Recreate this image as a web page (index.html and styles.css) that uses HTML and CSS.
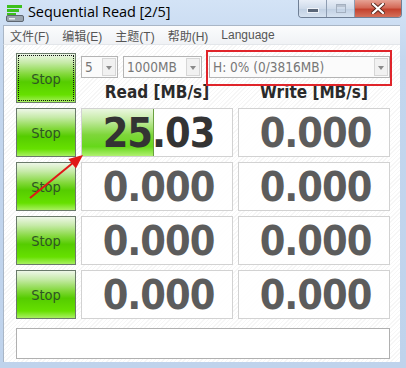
FILE: index.html
```html
<!DOCTYPE html>
<html>
<head>
<meta charset="utf-8">
<link rel="stylesheet" href="styles.css">
</head>
<body>
<div class="window">
  <div class="titlebar">
    <svg class="app-icon" width="20" height="18" viewBox="0 0 20 18">
      <rect x="2" y="1" width="15" height="3" fill="#3cc01c"/>
      <rect x="2" y="5" width="12" height="3" fill="#3cc01c"/>
      <rect x="2" y="9" width="9" height="2" fill="#3cc01c"/>
      <rect x="1.5" y="11.5" width="17" height="6" rx="1.5" fill="#9aa4ae" stroke="#5e6670"/>
      <rect x="4" y="14" width="6" height="1.5" fill="#e8ecf0"/>
    </svg>
    <span class="title">Sequential Read [2/5]</span>
    <div class="caption-btns">
      <div class="cbtn min"><span class="min-glyph"></span></div>
      <div class="cbtn max"><span class="max-glyph"></span></div>
      <div class="cbtn close">
        <svg width="14" height="11" viewBox="0 0 14 11">
          <path d="M2 1 L12 10 M12 1 L2 10" stroke="#5a2a20" stroke-width="4" stroke-linecap="square"/>
          <path d="M2 1 L12 10 M12 1 L2 10" stroke="#fff" stroke-width="2.2" stroke-linecap="square"/>
        </svg>
      </div>
    </div>
  </div>
  <div class="menubar">
    <span class="menu-item">文件(F)</span>
    <span class="menu-item">编辑(E)</span>
    <span class="menu-item">主题(T)</span>
    <span class="menu-item">帮助(H)</span>
    <span class="menu-item">Language</span>
  </div>
  <div class="client">
    <div class="grid">
      <div class="stop big focused"><span>Stop</span></div>
      <div class="top-right">
        <div class="selects">
          <div class="select s-count"><span>5</span><i class="arrow"></i></div>
          <div class="select s-size"><span>1000MB</span><i class="arrow"></i></div>
          <div class="select s-drive annotated"><span>H: 0% (0/3816MB)</span><i class="arrow"></i></div>
        </div>
        <div class="heads">
          <div class="head">Read [MB/s]</div>
          <div class="head">Write [MB/s]</div>
        </div>
      </div>

      <div class="stop"><span>Stop</span></div>
      <div class="val active"><div class="bar" style="width:47%"></div><span>25.03</span></div>
      <div class="val"><span>0.000</span></div>

      <div class="stop"><span>Stop</span></div>
      <div class="val"><span>0.000</span></div>
      <div class="val"><span>0.000</span></div>

      <div class="stop"><span>Stop</span></div>
      <div class="val"><span>0.000</span></div>
      <div class="val"><span>0.000</span></div>

      <div class="stop"><span>Stop</span></div>
      <div class="val"><span>0.000</span></div>
      <div class="val"><span>0.000</span></div>
    </div>
    <div class="status"></div>
    <svg class="annot-arrow" width="70" height="60" viewBox="0 0 70 60">
      <line x1="3" y1="45" x2="47" y2="9" stroke="#e01818" stroke-width="2"/>
      <polygon points="56,2 48.9,15.5 41.3,6.1" fill="#e01818"/>
    </svg>
  </div>
</div>
</body>
</html>
```
FILE: styles.css
```css
html, body {
  margin: 0;
  padding: 0;
}
body {
  width: 406px;
  height: 368px;
  overflow: hidden;
  font-family: "DejaVu Sans", sans-serif;
}
.window {
  width: 406px;
  height: 368px;
  box-sizing: border-box;
  background: linear-gradient(#d3e3f6, #c3d6ee 60px, #bfd3ec);
  display: flex;
  flex-direction: column;
  padding: 0 6px 6px 3px;
}
.titlebar {
  height: 25px;
  display: flex;
  align-items: flex-start;
  position: relative;
  margin-right: -6px;
}
.app-icon {
  margin: 4px 0 0 2px;
}
.title {
  font-family: "Open Sans", "Noto Sans", sans-serif;
  font-size: 14.5px;
  color: #000;
  margin: 2px 0 0 3px;
  letter-spacing: -0.1px;
}
.caption-btns {
  margin-left: auto;
  margin-right: 4px;
  display: flex;
  height: 17px;
  border: 1px solid #6f7f95;
  border-top: none;
  border-radius: 0 0 4px 4px;
  overflow: hidden;
}
.cbtn {
  display: flex;
  align-items: center;
  justify-content: center;
}
.min, .max {
  width: 27px;
  background: linear-gradient(#e8eef7, #cfdbea 50%, #c0cfe2 51%, #d6e2f0);
  border-right: 1px solid #8e9db2;
}
.min-glyph {
  width: 10px;
  height: 3px;
  background: #5a6678;
  border: 1px solid #eef2f8;
  margin-top: 4px;
}
.max-glyph {
  width: 8px;
  height: 7px;
  border: 1px solid #a4b0c0;
  box-shadow: inset 0 2px 0 #b8c2d0;
}
.close {
  width: 46px;
  background: linear-gradient(#e6a294, #d46a58 45%, #c4422e 55%, #d4705a);
}
.menubar {
  height: 18px;
  background: linear-gradient(#fbfcfd, #f0f2f5);
  border-top: 1px solid #a9b6c6;
  border-left: 1px solid #a9b6c6;
  display: flex;
  align-items: center;
  padding-left: 6px;
}
.menu-item {
  font-family: "Liberation Sans", "Noto Sans CJK SC", sans-serif;
  font-size: 12px;
  color: #555;
  margin-right: 13px;
}
.client {
  flex: 1;
  position: relative;
  border-left: 1px solid #a9b6c6;
  border-top: 1px solid #e3e6ea;
  background:
    repeating-linear-gradient(135deg, #ffffff 0 2px, #f6f6f6 2px 3px);
  padding: 8px 0 0 12px;
}
.grid {
  display: grid;
  grid-template-columns: 60px 152px 152px;
  grid-template-rows: 50px 49px 49px 49px 49px;
  column-gap: 5px;
  row-gap: 5px;
}
.stop {
  box-sizing: border-box;
  border: 1px solid #6a7a6a;
  background: linear-gradient(#eef7e8 0%, #c6eaa8 18%, #82d83a 42%, #55cc00 58%, #66e000 85%, #a8f060 100%);
  display: flex;
  align-items: center;
  justify-content: center;
  position: relative;
}
.stop span {
  font-family: "DejaVu Sans Condensed", "DejaVu Sans", sans-serif;
  font-size: 14.5px;
  color: #2f5524;
  margin-top: 1px;
}
.stop.focused::after {
  content: "";
  position: absolute;
  inset: 1px;
  border: 1px dotted #111;
}
.top-right {
  grid-column: 2 / 4;
  display: flex;
  flex-direction: column;
}
.selects {
  display: flex;
  margin-top: 3px;
  gap: 5px;
}
.select {
  box-sizing: border-box;
  height: 22px;
  border: 1px solid #b4b4b4;
  background: #fbfbfb;
  display: flex;
  align-items: center;
  position: relative;
}
.select span {
  font-family: "DejaVu Sans Condensed", "DejaVu Sans", sans-serif;
  font-size: 13.5px;
  color: #777;
  padding-left: 3px;
  flex: 1;
  white-space: nowrap;
}
.arrow {
  width: 14px;
  height: 18px;
  margin-right: 1px;
  box-sizing: border-box;
  border: 1px solid #d6d6d6;
  background: #f1f1f1;
  position: relative;
}
.arrow::after {
  content: "";
  position: absolute;
  left: 3px;
  top: 7px;
  border-left: 3.5px solid transparent;
  border-right: 3.5px solid transparent;
  border-top: 4px solid #8a8a8a;
}
.s-count { width: 37px; }
.s-size { width: 79px; }
.s-drive { width: 181px; margin-left: 2px; }
.annotated::after {
  content: "";
  position: absolute;
  left: -4px;
  right: -3px;
  top: -7px;
  bottom: -9px;
  border: 2px solid #e0242a;
}
.heads {
  display: flex;
  column-gap: 5px;
  margin-top: 4px;
}
.head {
  width: 152px;
  text-align: center;
  font-family: "DejaVu Sans Condensed", "DejaVu Sans", sans-serif;
  font-weight: bold;
  font-size: 17px;
  color: #2a2a2a;
  line-height: 20px;
}
.val {
  box-sizing: border-box;
  border: 1px solid #d2d2d2;
  background: rgba(255,255,255,0.9);
  position: relative;
  display: flex;
  align-items: center;
  justify-content: center;
}
.val span {
  position: relative;
  font-family: "DejaVu Sans Condensed", "DejaVu Sans", sans-serif;
  font-weight: bold;
  font-size: 41px;
  letter-spacing: -1px;
  color: #5c5c5c;
  line-height: 1;
  margin-top: 1px;
  padding-left: 3px;
}
.val.active span { color: #333; }
.bar {
  position: absolute;
  left: 0;
  top: 0;
  bottom: 0;
  background: linear-gradient(#eaf7e0 0%, #c2eaa0 25%, #7ed63a 55%, #66d81a 80%, #b0f070 100%);
  border-right: 1px solid #6aa040;
}
.status {
  box-sizing: border-box;
  width: 374px;
  height: 31px;
  margin-top: 9px;
  border: 1px solid #b0b0b0;
  background: #fff;
}
.annot-arrow {
  position: absolute;
  left: 23px;
  top: 108px;
}
```
